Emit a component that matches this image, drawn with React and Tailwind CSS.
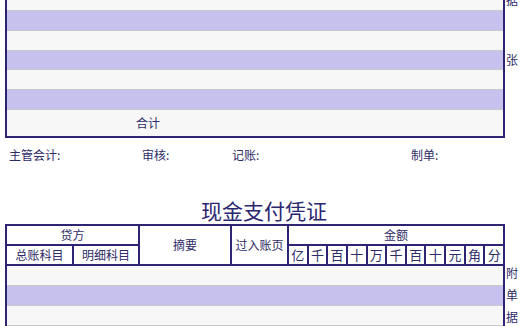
const stripes = ['purple', 'light', 'purple', 'light', 'purple']
const digits = ['亿', '千', '百', '十', '万', '千', '百', '十', '元', '角', '分']
const signers = [
  { label: '主管会计:', w: 'w-[133px]' },
  { label: '审核:', w: 'w-[90px]' },
  { label: '记账:', w: 'w-[179px]' },
  { label: '制单:', w: 'w-[80px]' },
]

function Row({ tone, h = 'h-[19.8px]' }) {
  return (
    <div
      className={`${h} border-b border-[#c9c9c9] ${tone === 'purple' ? 'bg-[#c6c1ed]' : 'bg-[#f7f7f7]'}`}
    />
  )
}

export default function App() {
  return (
    <div className="w-[526px] h-[326px] overflow-hidden bg-white text-[#2e2b66] font-['Noto_Sans_CJK_SC',sans-serif]">
      {/* previous voucher, scrolled */}
      <div className="flex">
        <div className="ml-[5px] w-[500px] border-x-2 border-b-2 border-[#2d2473]">
          <Row tone="light" h="h-[11px]" />
          {stripes.map((tone, i) => (
            <Row key={i} tone={tone} />
          ))}
          <div className="h-[26px] bg-[#f7f7f7] pl-[129px] flex items-center text-[12px] leading-none">
            合计
          </div>
        </div>
        <div className="w-[14px] flex flex-col items-center text-[12px] leading-[22px]">
          <span className="-mt-[11px]">据</span>
          <span className="mt-[38px]">张</span>
        </div>
      </div>

      {/* signatures */}
      <div className="mt-[9px] flex pl-[9px] text-[12px] leading-[16px]">
        {signers.map((s) => (
          <div key={s.label} className={s.w}>
            {s.label}
          </div>
        ))}
      </div>

      <h1 className="mt-[33px] pl-[2px] text-center text-[21px] leading-[28px] text-[#2a2670]">现金支付凭证</h1>

      {/* cash payment voucher */}
      <div className="flex">
        <div className="ml-[5px] w-[500px]">
          <div className="grid grid-cols-[67px_66px_92px_57px_repeat(11,minmax(0,1fr))] grid-rows-[20px_20px] border-l-2 border-t-2 border-[#2d2473] bg-white text-[12px] leading-none">
            <div className="col-span-2 flex items-center justify-center border-r-2 border-b-2 border-[#2d2473]">贷方</div>
            <div className="row-span-2 flex items-center justify-center border-r-2 border-b-2 border-[#2d2473]">摘要</div>
            <div className="row-span-2 flex items-center justify-center border-r-2 border-b-2 border-[#2d2473]">过入账页</div>
            <div className="col-span-11 flex items-center justify-center border-r-2 border-b-2 border-[#2d2473]">金额</div>
            <div className="flex items-center justify-center border-r-2 border-b-2 border-[#2d2473]">总账科目</div>
            <div className="flex items-center justify-center border-r-2 border-b-2 border-[#2d2473]">明细科目</div>
            {digits.map((d, i) => (
              <div key={i} className="flex items-center justify-center border-r-2 border-b-2 border-[#2d2473] text-[13px]">
                {d}
              </div>
            ))}
          </div>
          <div className="border-x-2 border-[#2d2473]">
            <Row tone="light" h="h-[20px]" />
            <Row tone="purple" h="h-[20px]" />
            <Row tone="light" h="h-[20px]" />
          </div>
        </div>
        <div className="w-[14px] pt-[38px] flex flex-col items-center text-[12px] leading-[22px]">
          <span>附</span>
          <span>单</span>
          <span>据</span>
        </div>
      </div>
    </div>
  )
}
